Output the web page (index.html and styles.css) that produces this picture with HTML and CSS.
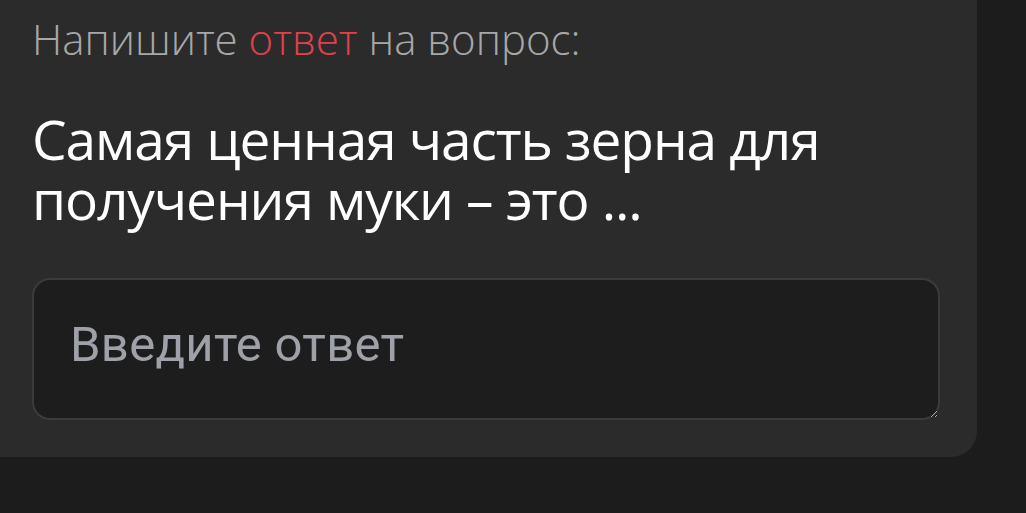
FILE: index.html
```html
<!DOCTYPE html>
<html lang="ru">
<head>
<meta charset="utf-8">
<link rel="stylesheet" href="styles.css">
</head>
<body>
<div class="page">
  <div class="card">
    <p class="hint">Напишите <span class="accent">ответ</span> на вопрос:</p>
    <h2 class="question">Самая ценная часть зерна для получения муки – это ...</h2>
    <div class="field">
      <textarea class="answer" placeholder="Введите ответ"></textarea>
    </div>
  </div>
</div>
</body>
</html>
```
FILE: styles.css
```css
html, body {
  margin: 0;
  padding: 0;
  background: #1c1c1c;
  height: 100%;
  overflow: hidden;
}
.page {
  padding-right: 49px;
}
.card {
  margin-top: -40px;
  margin-left: -40px;
  background: #2b2b2b;
  border-radius: 0 0 26px 0;
  padding: 54px 37px 37px 72px;
}
.hint {
  margin: 0;
  font-family: "Open Sans", sans-serif;
  font-weight: 300;
  font-size: 42px;
  line-height: 50px;
  color: #a8a8a8;
}
.accent {
  color: #e0414a;
}
.question {
  margin: 45px 0 0;
  font-family: "Open Sans", sans-serif;
  font-weight: 500;
  font-size: 55px;
  line-height: 60px;
  letter-spacing: -1.1px;
  color: #ffffff;
  max-width: 830px;
}
.field {
  margin-top: 49px;
}
.answer {
  display: block;
  box-sizing: border-box;
  width: 100%;
  height: 142px;
  resize: vertical;
  background: #1d1d1d;
  border: 2px solid #3b3b3b;
  border-radius: 18px;
  padding: 36px 36px 20px;
  font-family: "Roboto", sans-serif;
  font-size: 49px;
  line-height: 1.172;
  letter-spacing: 0.3px;
  color: #fff;
  outline: none;
}
.answer::placeholder {
  color: #9ea2a8;
}
```
